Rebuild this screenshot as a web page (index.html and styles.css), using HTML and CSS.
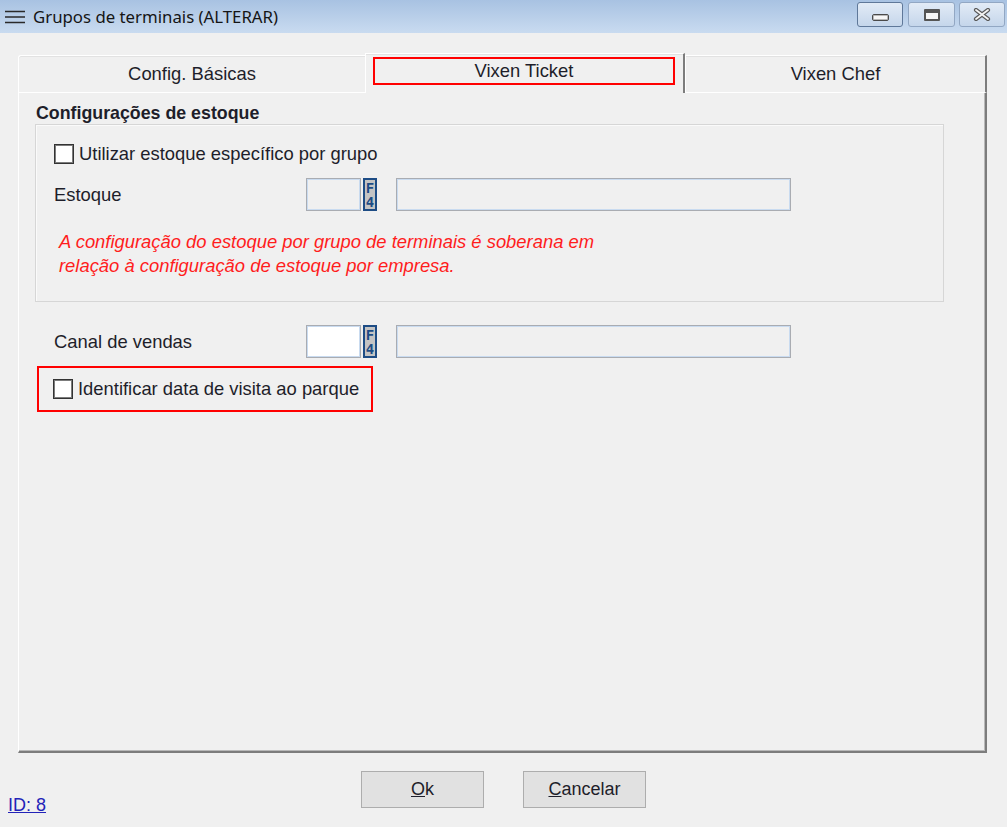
FILE: index.html
```html
<!DOCTYPE html>
<html>
<head>
    <meta charset="UTF-8">
    <title>Grupos de terminais (ALTERAR)</title>
    <link rel="stylesheet" href="styles.css">
</head>
<body>
    <!-- Title bar -->
    <div class="titlebar">
        <span class="menu-icon">
            <svg width="20" height="14" viewBox="0 0 20 14">
                <path d="M0 1.5h20M0 7h20M0 12.5h20" stroke="#2a2a2a" stroke-width="1.6"/>
            </svg>
        </span>
        <span class="title">Grupos de terminais (ALTERAR)</span>
        <div class="win-buttons">
            <button class="win-btn min"><span class="min-bar"></span></button>
            <button class="win-btn max"><span class="max-box"></span></button>
            <button class="win-btn close">
                <svg width="18" height="13" viewBox="0 0 18 13">
                    <path d="M3 2l12 9M15 2L3 11" stroke="#5a5a5a" stroke-width="4.2" stroke-linecap="round"/>
                    <path d="M3 2l12 9M15 2L3 11" stroke="#f4f4f4" stroke-width="1.8" stroke-linecap="round"/>
                </svg>
            </button>
        </div>
    </div>

    <div class="window">
        <!-- Tabs -->
        <div class="tabs">
            <div class="tab first">Config. Básicas</div>
            <div class="tab active"><span class="tab-focus">Vixen Ticket</span></div>
            <div class="tab last">Vixen Chef</div>
        </div>

        <div class="tab-panel">
            <h2 class="section-title">Configurações de estoque</h2>
            <div class="group-box">
                <label class="check-row"><span class="checkbox"></span>Utilizar estoque específico por grupo</label>
                <div class="field-row">
                    <span class="field-label">Estoque</span>
                    <span class="code-input"></span>
                    <span class="f4-btn"><b>F</b><b>4</b></span>
                    <span class="desc-input"></span>
                </div>
                <p class="note">A configuração do estoque por grupo de terminais é soberana em<br>relação à configuração de estoque por empresa.</p>
            </div>

            <div class="field-row canal">
                <span class="field-label">Canal de vendas</span>
                <span class="code-input editable"></span>
                <span class="f4-btn"><b>F</b><b>4</b></span>
                <span class="desc-input"></span>
            </div>

            <label class="check-row highlight"><span class="checkbox"></span>Identificar data de visita ao parque</label>
        </div>

        <!-- Footer buttons -->
        <div class="footer">
            <a class="record-id" href="#">ID: 8</a>
            <div class="actions">
                <button class="btn"><u>O</u>k</button>
                <button class="btn"><u>C</u>ancelar</button>
            </div>
        </div>
    </div>
</body>
</html>
```

FILE: styles.css
```css
* {
    box-sizing: border-box;
}

body {
    margin: 0;
    font-family: "Liberation Sans", Arial, sans-serif;
    font-size: 18.4px;
    color: #1e1e2a;
    background-color: #f0f0f0;
}

/* Title bar */
.titlebar {
    display: flex;
    align-items: center;
    height: 33px;
    padding-left: 5px;
    background: linear-gradient(#a8c2e2, #c9dbf0);
}

.menu-icon {
    display: flex;
    margin-right: 8px;
}

.title {
    font-family: "Noto Sans", sans-serif;
    font-size: 16.8px;
    color: #151515;
}

.win-buttons {
    display: flex;
    align-self: flex-start;
    margin: 2px 2px 0 auto;
}

.win-btn {
    display: flex;
    align-items: center;
    justify-content: center;
    width: 46px;
    height: 25px;
    margin-left: 4px;
    padding: 0;
    border: 1px solid #92a7c3;
    border-radius: 3px;
    background: linear-gradient(#e2ebf6, #c5d6eb);
}

.win-btn.min {
    border-color: #5f7899;
}

.win-btn.max {
    width: 47px;
    margin-left: 5px;
}

.min-bar {
    width: 17px;
    height: 7px;
    margin-top: 5px;
    border: 1px solid #4a4a4a;
    border-radius: 2px;
    background: #f6f6f6;
    box-shadow: inset 0 0 0 1px #b8b8b8;
}

.max-box {
    width: 16px;
    height: 12px;
    border: 2px solid #555;
    border-top-width: 4px;
    border-radius: 1px;
    background: #f6f6f6;
}

/* Tabs */
.tabs {
    display: flex;
    align-items: flex-end;
    height: 41px;
    margin-top: 19px;
    padding-left: 18px;
}

.tab {
    display: flex;
    align-items: center;
    justify-content: center;
    height: 38px;
    border-top: 1px solid #fff;
    border-left: 1px solid #fff;
    border-bottom: 1px solid #fff;
    box-shadow: inset 0 1px 0 #e2e2e2;
}

.tab.first {
    width: 347px;
    border-radius: 3px 0 0 0;
}

.tab.active {
    width: 320px;
    height: 40px;
    align-items: flex-start;
    padding: 3px 8px 0 7px;
    border-bottom: none;
    border-right: 2px solid #7d7d7d;
}

.tab-focus {
    display: flex;
    align-items: center;
    justify-content: center;
    flex: 1;
    height: 28px;
    border: 2px solid #f00;
}

.tab.last {
    width: 302px;
    border-right: 2px solid #7d7d7d;
}

.tab-panel {
    width: 969px;
    height: 660px;
    margin-left: 18px;
    padding: 9px 0 0 16px;
    border-left: 1px solid #fff;
    border-right: 2px solid #7d7d7d;
    border-bottom: 2px solid #7d7d7d;
    box-shadow: inset -1px -1px 0 #b9b9b9;
}

.section-title {
    margin: 0;
    padding-left: 1px;
    font-size: 17.8px;
    line-height: 22px;
}

.group-box {
    width: 909px;
    padding: 19px 0 23px 18px;
    border: 1px solid #d6d6d6;
    box-shadow: inset 1px 1px 0 #fafafa;
}

.check-row {
    display: flex;
    align-items: center;
    height: 20px;
    line-height: 20px;
}

.checkbox {
    width: 20px;
    height: 20px;
    margin-right: 5px;
    border: 1px solid #333;
    box-shadow: inset 0 0 0 1px #7c7c7c;
    background: #fff;
}

.field-row {
    display: flex;
    align-items: center;
    margin-top: 14px;
}

.field-label {
    width: 252px;
}

.code-input,
.desc-input {
    height: 33px;
    border: 1px solid #a9acb2;
    box-shadow: inset 0 0 0 1px #c9dbf0;
    background: #f0f0f0;
}

.code-input {
    width: 55px;
}

.code-input.editable {
    background: #fff;
}

.desc-input {
    width: 395px;
    margin-left: 19px;
}

/* F4 lookup button, letters stacked */
.f4-btn {
    display: flex;
    flex-direction: column;
    align-items: center;
    justify-content: center;
    width: 14px;
    height: 33px;
    margin-left: 2px;
    overflow: hidden;
    border: 2px solid #1d4c85;
    background: #c4c4c4;
    font-family: "DejaVu Sans Mono", monospace;
    font-size: 14px;
    line-height: 14px;
    color: #1d4c85;
}

.note {
    margin: 19px 0 0;
    padding-left: 5px;
    font-style: italic;
    line-height: 24px;
    color: #ff1d1d;
}

.field-row.canal {
    margin-top: 23px;
    padding-left: 19px;
}

.check-row.highlight {
    width: 336px;
    height: 46px;
    margin: 8px 0 0 2px;
    padding-left: 14px;
    border: 2px solid #f00;
}

/* Footer */
.footer {
    display: grid;
    grid-template-columns: 1fr auto 1fr;
    height: 74px;
}

.record-id {
    align-self: end;
    justify-self: start;
    margin: 0 0 12px 8px;
    font-size: 18px;
    line-height: 20px;
    color: #2323b8;
}

.actions {
    display: flex;
    gap: 39px;
    padding-top: 18px;
}

.btn {
    width: 123px;
    height: 37px;
    font: inherit;
    font-size: 18px;
    color: #1e1e2a;
    background: #e1e1e1;
    border: 1px solid #adadad;
}
```
